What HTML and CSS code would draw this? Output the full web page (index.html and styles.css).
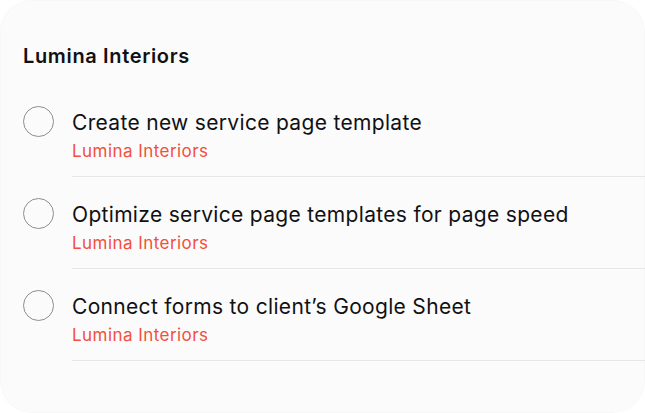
FILE: index.html
```html
<!DOCTYPE html>
<html lang="en">
<head>
    <meta charset="UTF-8">
    <meta name="viewport" content="width=device-width, initial-scale=1.0">
    <title>Lumina Interiors</title>
    <link rel="stylesheet" href="styles.css">
</head>
<body>
    <div class="card">
        <h1>Lumina Interiors</h1>
        <ul class="tasks">
            <li class="task">
                <span class="check"></span>
                <div class="info">
                    <p class="title">Create new service page template</p>
                    <p class="project">Lumina Interiors</p>
                </div>
            </li>
            <li class="task">
                <span class="check"></span>
                <div class="info">
                    <p class="title">Optimize service page templates for page speed</p>
                    <p class="project">Lumina Interiors</p>
                </div>
            </li>
            <li class="task">
                <span class="check"></span>
                <div class="info">
                    <p class="title">Connect forms to client’s Google Sheet</p>
                    <p class="project">Lumina Interiors</p>
                </div>
            </li>
        </ul>
    </div>
</body>
</html>
```

FILE: styles.css
```css
body {
    margin: 0;
    background-color: #ffffff;
    font-family: Inter, 'Noto Sans', sans-serif;
}
.card {
    width: 645px;
    height: 413px;
    box-sizing: border-box;
    background-color: #fbfbfc;
    border-radius: 32px;
    box-shadow: inset 0 0 0 1px rgba(0, 0, 0, 0.015);
    padding: 44px 0 0 23px;
}
.card h1 {
    margin: 0;
    font-size: 20px;
    line-height: 24px;
    font-weight: 600;
    letter-spacing: 0.65px;
    color: #111113;
}
.tasks {
    list-style: none;
    margin: 17px 0 0 0;
    padding: 0;
}
.task {
    display: flex;
    align-items: flex-start;
}
.check {
    flex: none;
    width: 29px;
    height: 29px;
    border: 1.5px solid #8e8e93;
    border-radius: 50%;
    margin-top: 21px;
    margin-right: 18px;
}
.info {
    flex: 1;
    height: 92px;
    box-sizing: border-box;
    border-bottom: 1px solid #e5e5ea;
}
.title {
    margin: 25px 0 0 0;
    font-size: 21px;
    line-height: 26px;
    letter-spacing: 0.32px;
    color: #111113;
}
.project {
    margin: 5px 0 0 0;
    font-size: 17px;
    line-height: 20px;
    letter-spacing: 0.45px;
    color: #f2503b;
}
```
